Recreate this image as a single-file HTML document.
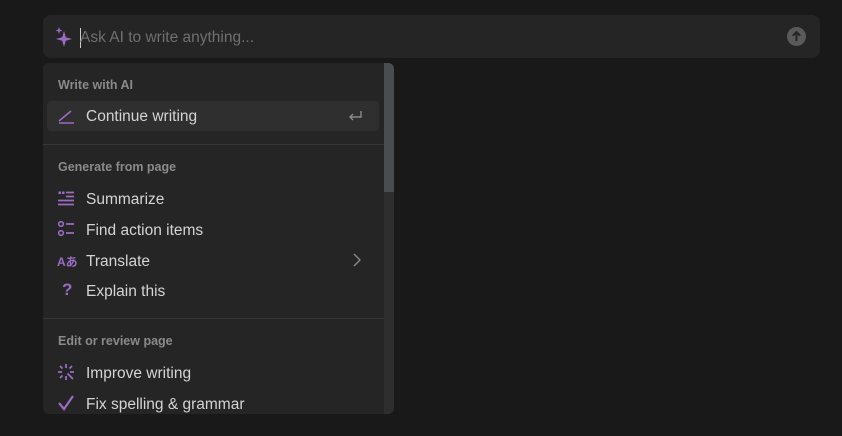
<!DOCTYPE html><html><head><style>
body{margin:0;width:842px;height:436px;background:#191919;font-family:"Liberation Sans",sans-serif;overflow:hidden;position:relative}
.inp{position:absolute;left:43px;top:15px;width:777px;height:43px;background:#252525;border-radius:8px}
.ph{position:absolute;left:80px;top:29px;font-size:15.5px;color:#6f6f6f;line-height:17px}
.cur{position:absolute;left:80px;top:28px;width:1px;height:20px;background:#ccc}
.menu{position:absolute;left:43px;top:63px;width:351px;height:351px;background:#252525;border-radius:6px;overflow:hidden}
.sb{position:absolute;right:0;top:0;width:10px;height:351px;background:#2e2e2e}
.th{position:absolute;right:0;top:0;width:10px;height:129px;background:#4a4d50}
.h{position:absolute;left:15px;font-size:12.5px;font-weight:bold;color:#8a8a8a}
.it{position:absolute;left:43px;font-size:15.5px;color:#d4d4d4}
.ic{position:absolute;left:14px;width:18px;height:18px}
.div{position:absolute;left:0;width:341px;height:1px;background:#373737}
.hl{position:absolute;left:4px;top:38px;width:332px;height:30px;background:#2f2f2f;border-radius:4px}
</style></head><body>
<div class="inp"></div>
<svg style="position:absolute;left:54px;top:26px" width="20" height="22" viewBox="0 0 20 22"><path d="M10 5 L11.8 11.2 L18 13 L11.8 14.8 L10 21 L8.2 14.8 L2 13 L8.2 11.2Z" fill="#9b6bc4"/><path d="M5 1 L5.9 3.6 L8.5 4.5 L5.9 5.4 L5 8 L4.1 5.4 L1.5 4.5 L4.1 3.6Z" fill="#9b6bc4"/></svg>
<div class="cur"></div><div class="ph">Ask AI to write anything...</div>
<svg style="position:absolute;left:787px;top:27px" width="19" height="19"><circle cx="9.5" cy="9.5" r="9.5" fill="#5a5a5a"/><path d="M9.5 14V5M5.8 8.7L9.5 5L13.2 8.7" stroke="#252525" stroke-width="2" fill="none"/></svg>
<div class="menu">
<div class="sb"></div><div class="th"></div>
<div class="h" style="top:15px">Write with AI</div>
<div class="hl"></div>
<svg class="ic" style="top:44px" viewBox="0 0 18 18"><path d="M2 16H17M2 14L14 4" stroke="#9b6bc4" stroke-width="1.6" fill="none"/></svg>
<div class="it" style="top:45px">Continue writing</div>
<svg style="position:absolute;left:304px;top:46px" width="16" height="14"><path d="M14 2V8H3M6 5L3 8L6 11" stroke="#8a8a8a" stroke-width="1.4" fill="none"/></svg>
<div class="div" style="top:81px"></div>
<div class="h" style="top:97px">Generate from page</div>
<svg class="ic" style="top:126px" viewBox="0 0 18 18"><path d="M1.5 2.5h2.5v2.5h-2.5zM5 2.5h2.5v2.5h-2.5z" fill="#9b6bc4"/><path d="M9 3.5H17M9 7.5H17M1 11.5H17M1 15.5H17" stroke="#9b6bc4" stroke-width="1.8"/></svg>
<div class="it" style="top:128px">Summarize</div>
<svg class="ic" style="top:157px" viewBox="0 0 18 18"><circle cx="4" cy="4" r="2.3" stroke="#9b6bc4" stroke-width="1.6" fill="none"/><circle cx="4" cy="13" r="2.3" stroke="#9b6bc4" stroke-width="1.6" fill="none"/><path d="M9 4H17M9 13H17" stroke="#9b6bc4" stroke-width="1.8"/></svg>
<div class="it" style="top:159px">Find action items</div>
<div style="position:absolute;left:14px;top:190px;font-size:12px;font-weight:bold;color:#9b6bc4;font-family:'Liberation Sans','Noto Sans CJK JP',sans-serif">Aあ</div>
<div class="it" style="top:190px">Translate</div>
<svg style="position:absolute;left:310px;top:190px" width="8" height="14"><path d="M1 1L7 7L1 13" stroke="#8a8a8a" stroke-width="1.4" fill="none"/></svg>
<div style="position:absolute;left:19px;top:217px;font-size:17px;font-weight:bold;color:#9b6bc4">?</div>
<div class="it" style="top:220px">Explain this</div>
<div class="div" style="top:255px"></div>
<div class="h" style="top:271px">Edit or review page</div>
<svg class="ic" style="top:300px" viewBox="0 0 18 18"><path d="M9 1V5M9 13V17M1 9H5M13 9H17M3 3L5.5 5.5M15 3L12.5 5.5M3 15L5.5 12.5M10.5 10.5L16 16" stroke="#9b6bc4" stroke-width="1.8"/></svg>
<div class="it" style="top:302px">Improve writing</div>
<svg class="ic" style="top:331px" viewBox="0 0 18 18"><path d="M2 9L7 15L16 2" stroke="#9b6bc4" stroke-width="2.2" fill="none"/></svg>
<div class="it" style="top:333px">Fix spelling &amp; grammar</div>
</div>
</body></html>
